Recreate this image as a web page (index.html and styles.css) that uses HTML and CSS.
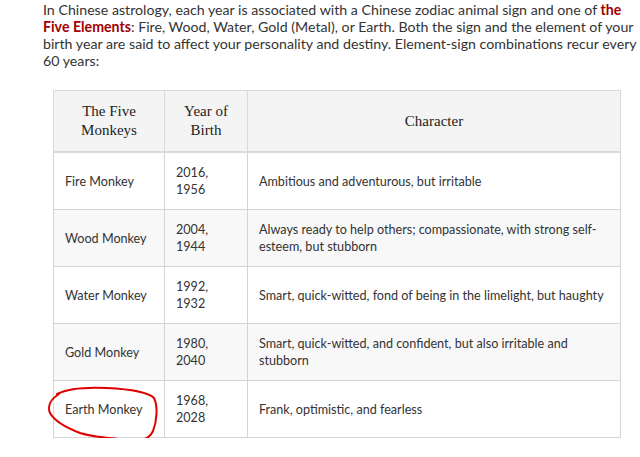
FILE: index.html
```html
<!DOCTYPE html>
<html>
<head>
<meta charset="utf-8">
<link rel="stylesheet" href="styles.css">
</head>
<body>
<div class="post">
  <p class="intro">In Chinese astrology, each year is associated with a Chinese zodiac animal sign and one of <b class="hl">the Five Elements</b>: Fire, Wood, Water, Gold (Metal), or Earth. Both the sign and the element of your birth year are said to affect your personality and destiny. Element-sign combinations recur every 60 years:</p>
  <table class="monkeys">
    <colgroup><col class="c1"><col class="c2"><col class="c3"></colgroup>
    <thead>
      <tr><th>The Five<br>Monkeys</th><th>Year of<br>Birth</th><th>Character</th></tr>
    </thead>
    <tbody>
      <tr><td>Fire Monkey</td><td>2016,<br>1956</td><td>Ambitious and adventurous, but irritable</td></tr>
      <tr class="alt"><td>Wood Monkey</td><td>2004,<br>1944</td><td>Always ready to help others; compassionate, with strong self-esteem, but stubborn</td></tr>
      <tr><td>Water Monkey</td><td>1992,<br>1932</td><td>Smart, quick-witted, fond of being in the limelight, but haughty</td></tr>
      <tr class="alt"><td>Gold Monkey</td><td>1980,<br>2040</td><td>Smart, quick-witted, and confident, but also irritable and stubborn</td></tr>
      <tr><td class="circled">Earth Monkey<svg class="ring" width="116" height="60" viewBox="0 0 116 60"><path d="M10 8 C 20 3, 40 1, 60 2 C 80 3, 100 5, 107 12 C 111 20, 110 35, 106 45 C 103 52, 96 55, 86 54 C 70 53, 50 52, 33 47 C 20 42, 8 36, 3 27 C 0 20, 4 13, 12 8" fill="none" stroke="#e00000" stroke-width="2" stroke-linecap="round"/></svg></td><td>1968,<br>2028</td><td>Frank, optimistic, and fearless</td></tr>
    </tbody>
  </table>
</div>
</body>
</html>
```

FILE: styles.css
```css
html, body {
  margin: 0;
  padding: 0;
  background: #ffffff;
}

.post {
  padding: 1px 0 0 43px;
  font-family: Lato, "Open Sans", sans-serif;
  color: #333333;
}

.intro {
  margin: 0 0 21px 0;
  width: 597px;
  font-size: 14.2px;
  line-height: 17px;
}

.hl {
  color: #a20000;
  font-weight: bold;
}

.monkeys {
  margin-left: 10px;
  width: 567px;
  border-collapse: collapse;
  table-layout: fixed;
  border: 1px solid #dcdcdc;
}

.c1 { width: 111px; }
.c2 { width: 83px; }
.c3 { width: 373px; }

.monkeys th {
  background: #f4f4f4;
  font-family: "Liberation Serif", serif;
  font-weight: normal;
  font-size: 15px;
  line-height: 19px;
  color: #222222;
  height: 60px;
  padding: 0 8px;
  text-align: center;
  vertical-align: middle;
  border: 1px solid #dadada;
  border-bottom: 2px solid #dadada;
}

.monkeys td {
  font-size: 12.6px;
  line-height: 17px;
  height: 56px;
  padding: 0 4px 0 11px;
  vertical-align: middle;
  border: 1px solid #d4d4d4;
  color: #333333;
}

.monkeys tr.alt td {
  background: #f8f8f8;
}

.circled {
  position: relative;
}

.ring {
  position: absolute;
  left: -7px;
  top: 5px;
}
```
